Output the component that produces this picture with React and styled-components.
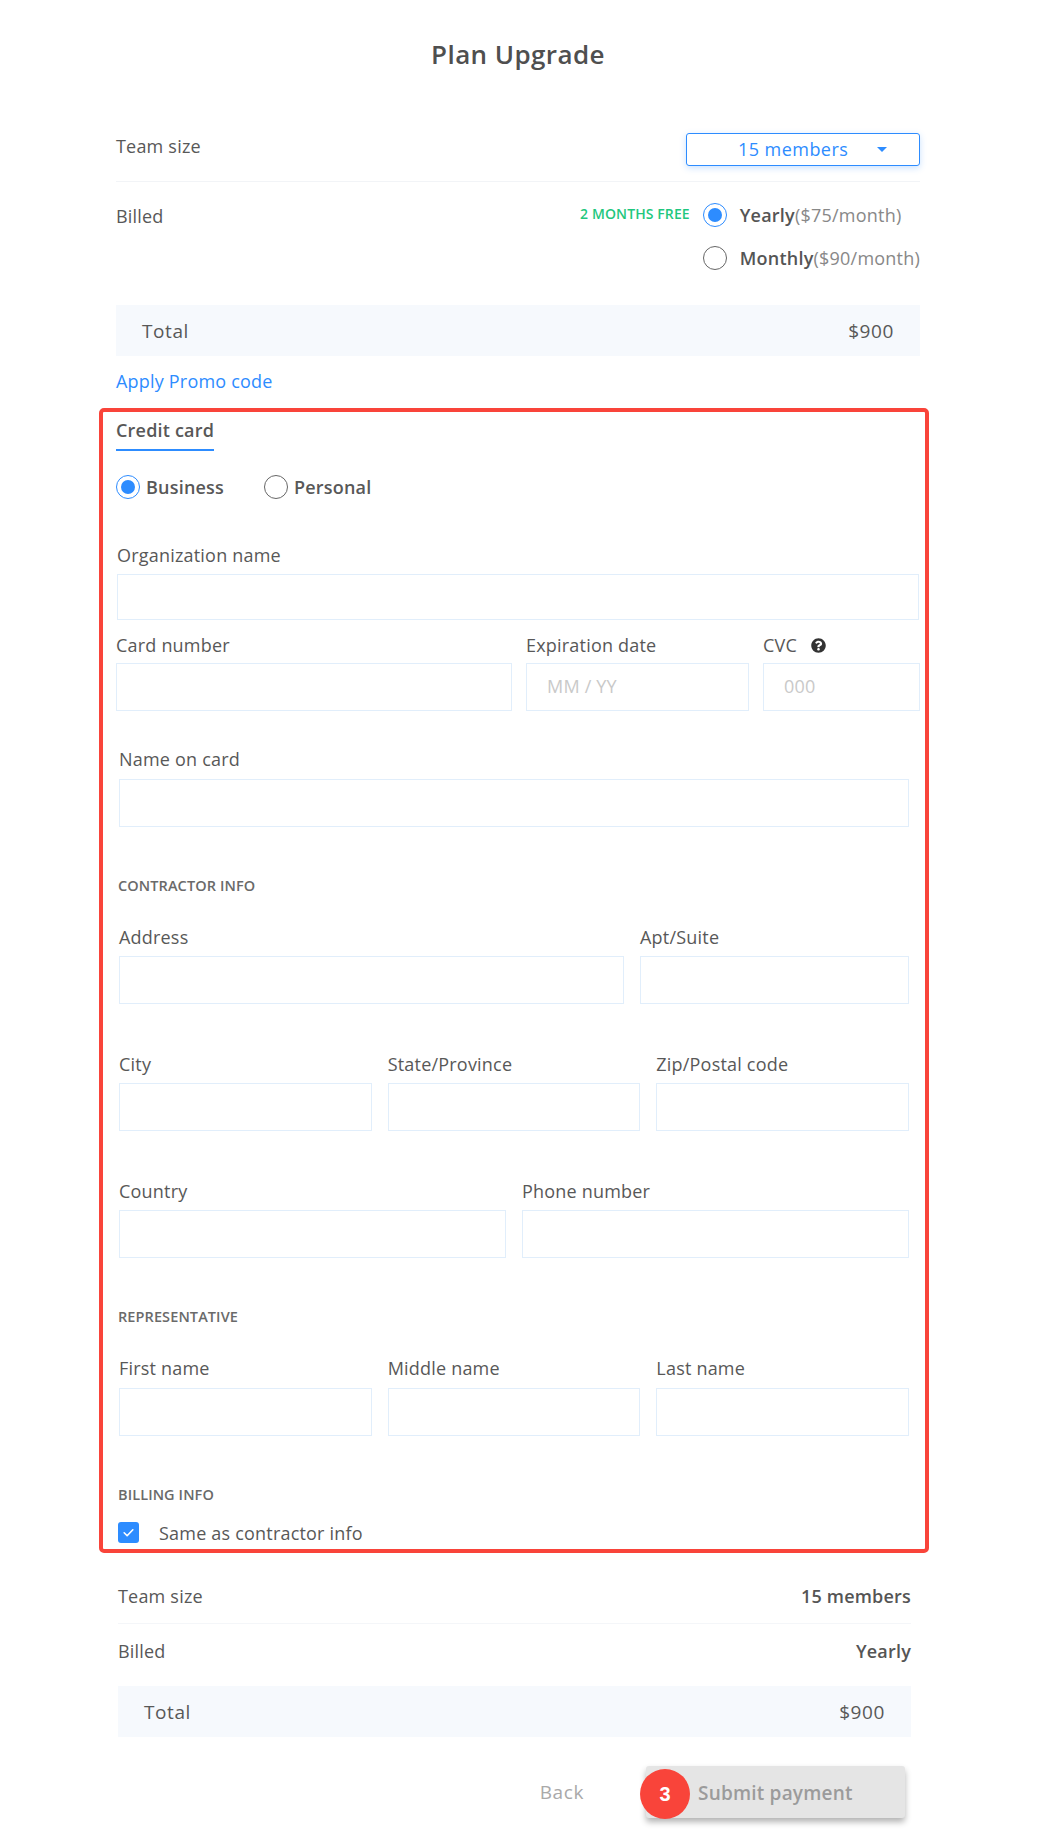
import React from "react";
import styled, { createGlobalStyle } from "styled-components";
import { FaQuestionCircle } from "react-icons/fa";

const Global = createGlobalStyle`
  * { box-sizing: border-box; }
  html, body { margin: 0; padding: 0; background: #fff; }
  body { font-family: "Open Sans", "Liberation Sans", sans-serif; color: #585858; font-size: 18px; letter-spacing: 0.2px; }
`;
const Page = styled.div`width: 830px; height: 1844px; margin-left: 99px; position: relative; overflow: hidden;`;
const Block = styled.div`padding: 0 9px 0 17px;`;
const Title = styled.h1`margin: 0; height: 110px; padding-top: 38px; line-height: 32px; text-align: center; font-size: 26px; font-weight: 600; color: #4f4f4f; letter-spacing: 0.4px;`;
const Row = styled.div`display: flex; justify-content: space-between; align-items: flex-start;`;
const TeamRow = styled(Row)`height: 72px; border-bottom: 1px solid #f2f4f7;`;
const RowLabel = styled.span`display: block; margin-top: ${p => p.$top}px; line-height: 24px;`;
const Select = styled.div`
  width: 234px; height: 33px; margin-top: 23px; position: relative; border: 1px solid #2d8cff; border-radius: 3px;
  box-shadow: 0 2px 6px rgba(45,140,255,.25); color: #2d8cff; line-height: 31px; padding-left: 51px; letter-spacing: 0.45px;
`;
const Caret = styled.i`position: absolute; right: 32px; top: 13px; width: 0; height: 0; border: 5px solid transparent; border-top: 5px solid #2d8cff; border-bottom: 0;`;
const BilledRow = styled(Row)`height: 123px;`;
const Plans = styled.div`display: flex; flex-direction: column; gap: 19px; margin-top: 21px;`;
const PlanLine = styled.div`display: flex; align-items: center; height: 24px; position: relative;`;
const Free = styled.span`position: absolute; right: 100%; margin-right: 13px; top: 0; line-height: 22px; white-space: nowrap; font-size: 14px; font-weight: 600; color: #1fc77e; letter-spacing: 0.1px;`;
const Radio = styled.span`
  width: 24px; height: 24px; border-radius: 50%; flex: none; position: relative; background: #fff;
  border: 1px solid ${p => (p.$on ? "#2d8cff" : "#666")};
  &::after { content: ""; display: ${p => (p.$on ? "block" : "none")}; position: absolute; inset: 4px; border-radius: 50%; background: #2d8cff; }
`;
const PlanText = styled.span`margin-left: 13px; white-space: nowrap; color: #888; letter-spacing: 0.22px;`;
const Strong = styled.b`font-weight: 600; color: #555;`;
const Total = styled.div`display: flex; justify-content: space-between; align-items: center; height: 51px; padding: 0 26px; background: #f6f9fd; font-size: 19px; letter-spacing: 0.6px;`;
const Promo = styled.a`display: block; margin-top: 13px; height: 39px; line-height: 24px; color: #2d8cff;`;
const Frame = styled.section`border: 4px solid #f9443a; border-radius: 5px; height: 1145px; padding: 0 5px 0 13px;`;
const Tab = styled.div`display: inline-block; padding: 6px 0 7px; line-height: 24px; font-weight: 600; border-bottom: 2px solid #2d8cff;`;
const RadioRow = styled.div`display: flex; gap: 40px; margin-top: 24px;`;
const RadioItem = styled.label`display: flex; align-items: center; gap: 6px; line-height: 24px; font-weight: 600;`;
const FieldRow = styled.div`
  display: grid; grid-template-columns: ${p => p.$cols}; column-gap: ${p => p.$gap ?? 14}px;
  margin: ${p => p.$top}px ${p => p.$right ?? 11}px 0 ${p => p.$left ?? 3}px;
`;
const Field = styled.div`display: flex; flex-direction: column; min-width: 0;`;
const Label = styled.label`display: flex; align-items: center; gap: 14px; line-height: 22px; margin-bottom: ${p => (p.$gap ?? 6) + 2}px;`;
const Input = styled.input`width: 100%; height: ${p => p.$h ?? 48}px; border: 1px solid #e1eefb; background: #fff; padding: 0 20px 2px; font: inherit; letter-spacing: inherit; outline: none; &::placeholder { color: #c9c9c9; opacity: 1; }`;
const Heading = styled.h3`margin: ${p => p.$top}px 0 0 2px; line-height: 20px; font-size: 14.5px; font-weight: 600; color: #6a6a6a; text-transform: uppercase; letter-spacing: 0.1px;`;
const CheckRow = styled.label`display: flex; align-items: center; gap: 20px; margin: 17px 0 0 2px; height: 21px; line-height: 24px;`;
const CheckBox = styled.span`width: 21px; height: 21px; border-radius: 3px; background: #2d8cff; display: flex; align-items: center; justify-content: center;`;
const Summary = styled.div`padding: 0 18px 0 19px;`;
const SumRow = styled.div`display: flex; justify-content: space-between; align-items: ${p => p.$align ?? "center"}; height: ${p => p.$h}px; padding-top: ${p => p.$pad ?? 0}px; padding-bottom: ${p => p.$padB ?? 0}px; line-height: 24px; ${p => p.$line ? "border-bottom: 1px solid #f4f6f9;" : ""}`;
const SummaryTotal = styled(Total)`margin-top: 6px;`;
const Actions = styled.div`display: flex; align-items: center; justify-content: flex-end; margin: 29px 6px 0 0; gap: 62px;`;
const Back = styled.span`color: #a9a9a9; font-size: 19px; letter-spacing: 0.6px;`;
const Submit = styled.div`width: 259px; height: 52px; position: relative; background: #e5e5e5; border-radius: 3px; box-shadow: 0 4px 6px rgba(0,0,0,.3); line-height: 54px; padding-left: 52px; color: #9b9b9b; font-size: 19px; letter-spacing: 0.2px; font-weight: 600;`;
const Badge = styled.span`position: absolute; left: -6px; top: 3px; width: 50px; height: 50px; border-radius: 50%; background: #f9443a; color: #fff; font: 700 20px/50px "Liberation Sans", sans-serif; letter-spacing: 0; text-align: center;`;

const F = ({ label, gap, h, ph, children }) => (
  <Field>
    <Label $gap={gap}>{label}{children}</Label>
    <Input $h={h} placeholder={ph} />
  </Field>
);

export default function App() {
  return (
    <Page>
      <Global />
      <Block>
        <Title>Plan Upgrade</Title>
        <TeamRow>
          <RowLabel $top={24}>Team size</RowLabel>
          <Select>15 members<Caret /></Select>
        </TeamRow>
        <BilledRow>
          <RowLabel $top={22}>Billed</RowLabel>
          <Plans>
            <PlanLine>
              <Free>2 MONTHS FREE</Free>
              <Radio $on /><PlanText><Strong>Yearly</Strong>($75/month)</PlanText>
            </PlanLine>
            <PlanLine>
              <Radio /><PlanText><Strong>Monthly</Strong>($90/month)</PlanText>
            </PlanLine>
          </Plans>
        </BilledRow>
        <Total><span>Total</span><span>$900</span></Total>
        <Promo>Apply Promo code</Promo>
      </Block>
      <Frame>
        <Tab>Credit card</Tab>
        <RadioRow>
          <RadioItem><Radio $on />Business</RadioItem>
          <RadioItem><Radio />Personal</RadioItem>
        </RadioRow>
        <FieldRow $cols="1fr" $top={45} $left={1} $right={1}><F label="Organization name" h={46} /></FieldRow>
        <FieldRow $cols="396px 223px 157px" $top={14} $left={0} $right={0}>
          <F label="Card number" gap={5} />
          <F label="Expiration date" gap={5} ph="MM / YY" />
          <F label="CVC" gap={5} ph="000"><FaQuestionCircle size={15} color="#333" /></F>
        </FieldRow>
        <FieldRow $cols="1fr" $top={37}><F label="Name on card" gap={7} /></FieldRow>
        <Heading $top={49}>Contractor info</Heading>
        <FieldRow $cols="505px 269px" $gap={16} $top={30}>
          <F label="Address" />
          <F label="Apt/Suite" />
        </FieldRow>
        <FieldRow $cols="repeat(3, 1fr)" $gap={16} $top={49}>
          <F label="City" />
          <F label="State/Province" />
          <F label="Zip/Postal code" />
        </FieldRow>
        <FieldRow $cols="repeat(2, 1fr)" $gap={16} $top={49}>
          <F label="Country" />
          <F label="Phone number" />
        </FieldRow>
        <Heading $top={49}>Representative</Heading>
        <FieldRow $cols="repeat(3, 1fr)" $gap={16} $top={30}>
          <F label="First name" gap={7} />
          <F label="Middle name" gap={7} />
          <F label="Last name" gap={7} />
        </FieldRow>
        <Heading $top={49}>Billing info</Heading>
        <CheckRow>
          <CheckBox>
            <svg width="13" height="13" viewBox="0 0 24 24" fill="none" stroke="#fff" strokeWidth="3" strokeLinecap="round" strokeLinejoin="round"><path d="M4 12.5l5.5 5.5L20 7" /></svg>
          </CheckBox>
          Same as contractor info
        </CheckRow>
      </Frame>
      <Summary>
        <SumRow $h={71} $pad={31} $align="flex-start" $line><span>Team size</span><Strong>15 members</Strong></SumRow>
        <SumRow $h={56} $padB={2}><span>Billed</span><Strong>Yearly</Strong></SumRow>
        <SummaryTotal><span>Total</span><span>$900</span></SummaryTotal>
        <Actions>
          <Back>Back</Back>
          <Submit><Badge>3</Badge>Submit payment</Submit>
        </Actions>
      </Summary>
    </Page>
  );
}
